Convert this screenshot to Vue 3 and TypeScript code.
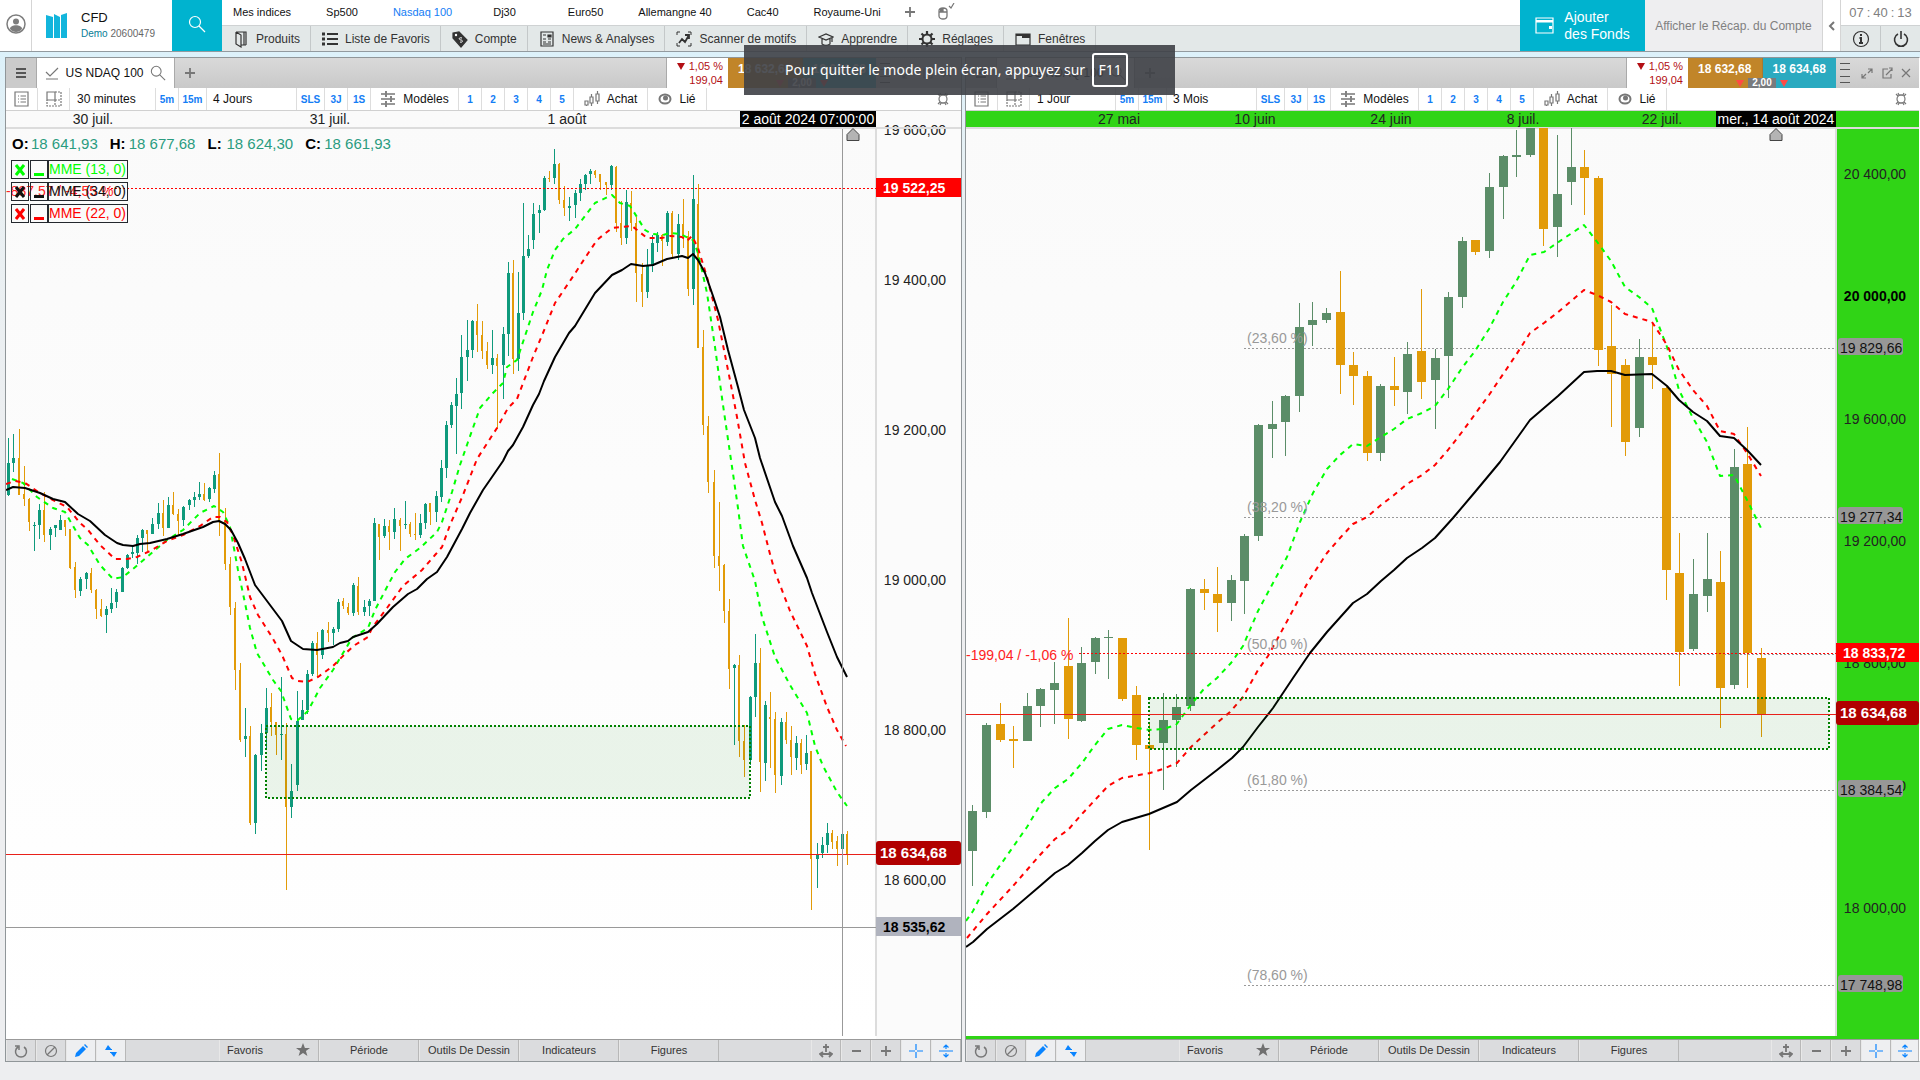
<script setup lang="ts">
type Candle = { x: number; hi: number; top: number; bot: number; lo: number; up: boolean }
type Level = { price: string; y: number; kind: string }

const icons: Record<string, string> = {
  user: '<circle cx="10" cy="10" r="9" fill="none" stroke="#7d7d7d" stroke-width="1.5"/><circle cx="10" cy="7.5" r="3" fill="#7d7d7d"/><path d="M4 15c0-5 12-5 12 0-3 4-9 4-12 0z" fill="#7d7d7d"/>',
  logo: '<path d="M0 2l7 2v21H0zM8 1l6 3v21H8zM15 2l6-2v25h-6z" fill="#12b5dc"/><path d="M7.5 2v23M14.5 1v24" stroke="#fff"/>',
  search: '<circle cx="7" cy="7" r="5.5"/><path d="M11 11l6 6"/>',
  book: '<path d="M3 2h10v13M3 2v12l5 3V5L3 2M11 2v13M8 15h5"/>',
  list: '<path d="M5 4h11M5 9h11M5 14h11" stroke-width="2"/><path d="M0 4h3M0 9h3M0 14h3" stroke-width="3"/>',
  tag: '<path d="M1 3l6-1 8 8-6 7-8-9z" fill="#333"/><circle cx="4" cy="5" r="1.2" fill="#fff" stroke="none"/><path d="M10 8c-4-1-3 2-1 2s2 3-1 2" stroke="#fff" stroke-width="1"/>',
  news: '<path d="M2 2h12v14H2z"/><path d="M4 5h3M4 9h3M4 12h3M9 9h3M9 12h3M4 14h8"/><path d="M9 5h3v2H9z" fill="#333"/>',
  scan: '<path d="M1 5V2h3M12 2h3v3M15 13v3h-3M4 16H1v-3" stroke-width="1"/><path d="M3 13l3-4 3 3 4-7M9 5h4v4" stroke-width="1.8"/>',
  learn: '<path d="M1 7l7-3 7 3-7 3zM4 9v5c3 2 5 2 8 0V9M14 8v4"/>',
  gear: '<circle cx="8" cy="9" r="4.5" stroke-width="2"/><path d="M8 1v3M8 14v3M0 9h3M13 9h3M2.5 3.5l2 2M11.5 12.5l2 2M2.5 14.5l2-2M11.5 5.5l2-2" stroke-width="2.2"/>',
  windows: '<path d="M1 4h14v11H1z"/><path d="M1 5h14M7 7h8" stroke-width="2"/>',
  wallet: '<path d="M1 2h17v15H1zM1 6h17" fill="none"/><path d="M1 5h17" stroke-width="2"/><path d="M14 10h3v3h-3z" fill="#fff" stroke="none"/>',
  info: '<circle cx="9" cy="9" r="7.5"/><path d="M7.5 8H9v5M7 13h4" stroke-width="2"/><path d="M9 4v2" stroke-width="2"/>',
  power: '<path d="M6 4a6.5 6.5 0 1 0 6 0M9 1v8" stroke-width="1.6"/>',
  mouse: '<path d="M1 8c0-4 8-4 8 0v5c0 4-8 4-8 0zM1 9h8M5 5v4" stroke-width="1.3"/><path d="M2 6h3v3H2z" fill="#777" stroke="none"/><path d="M11 3l2 2 3-5"/>',
  chart: '<path d="M1 7l4 4 8-8M1 14h12"/>',
  sheet: '<path d="M1 1h13v14H1z"/><path d="M4 5h1M4 8h1M4 11h1M6.5 5H12M6.5 8H12M6.5 11H12"/>',
  tiles: '<path d="M1 1h8v8H1z"/><path d="M9 1h6v14H1V9M9 9v6M9 9h6" stroke-dasharray="2 1"/>',
  sliders: '<path d="M1 3h4M7 3h8M1 8h9M12 8h3M1 13h4M7 13h8" stroke-width="1.5"/><path d="M6 0v6M11 5v6M6 10v6" stroke-width="1.8"/>',
  candles: '<path d="M1 10h3v4H1zM6 6h3v6H6zM12 3h3v7h-3zM7.5 3v3M7.5 12v3M13.5 0v3M13.5 10v3M2.5 14v1"/>',
  eye: '<ellipse cx="7" cy="7" rx="5.5" ry="4.5" stroke-width="2"/><circle cx="7.5" cy="6" r="2.5" fill="#777" stroke="none"/>',
  cog: '<circle cx="8" cy="8" r="4"/><path d="M3 3l2 2M13 3l-2 2M3 13l2-2M13 13l-2-2M5 2l1 2h4l1-2M5 14l1-2h4l1 2" stroke-width="1.2"/>',
  expand: '<path d="M7 2h4v4M11 2L7 6M5 11H1V7M1 11l4-4"/>',
  popout: '<path d="M7 2H2v9h8V7M5 8l6-6M8 1h3v3"/>',
  close: '<path d="M2 2l8 8M10 2l-8 8"/>',
  reload: '<path d="M4 3a5.5 5.5 0 1 0 6 0M1 2h4v4" stroke-width="1.5"/>',
  ban: '<circle cx="7" cy="7" r="5.5"/><path d="M3 11l8-8"/>',
  pencil: '<path d="M1 13l1-4 7-7 3 3-7 7zM10 1l1-1 3 3-1 1z" fill="#0a84ff" stroke="none"/>',
  swap: '<path d="M1 6l3-5 4 5zM6 8h7l-3 5z" fill="#0a84ff" stroke="none"/><path d="M2 5.5h6M6 8.5h6" stroke="#0a84ff"/>',
  star: '<path d="M7 0l1.9 4.9H14L9.9 8l1.5 5L7 10l-4.4 3 1.5-5L0 4.9h5.1z" fill="#707070" stroke="none"/>',
  fit: '<path d="M7 0v8M4 3h6M1 10h12M4 8l-3 2 3 3M10 8l3 2-3 3" stroke-width="1.8"/>',
  minus: '<path d="M3 7h9" stroke-width="2"/>',
  plus: '<path d="M2 7h10M7 2v10" stroke-width="1.8"/>',
  cross: '<path d="M7 0v6M7 8v6M0 7h6M8 7h6" stroke="#0a84ff"/>',
  updown: '<path d="M0 7h14M7 1v4M7 9v4M4.5 3.5L7 1l2.5 2.5M4.5 10.5L7 13l2.5-2.5" stroke="#0a84ff"/>',
}

const indices = ['Mes indices', 'Sp500', 'Nasdaq 100', 'Dj30', 'Euro50', 'Allemangne 40', 'Cac40', 'Royaume-Uni']
const menu = [
  ['book', 'Produits'], ['list', 'Liste de Favoris'], ['tag', 'Compte'], ['news', 'News & Analyses'],
  ['scan', 'Scanner de motifs'], ['learn', 'Apprendre'], ['gear', 'Réglages'], ['windows', 'Fenêtres'],
]

// Each candle is "x high bodyTop bodyBottom low direction".
const parse = (s: string): Candle[] =>
  s.trim().split(/\s*,\s*/).map((c) => {
    const [x, hi, top, bot, lo, d] = c.split(' ')
    return { x: +x, hi: +hi, top: +top, bot: +bot, lo: +lo, up: d === 'u' }
  })

const halfHour = parse(`8 438 463 495 496 u,13 434 458 463 472 u,19 429 458 495 495 d,24 466 494 499 506 d,29 498 499 522 531 d,34 522 525 526 551 u,39 504 510 525 539 u,44 492 510 535 542 d,50 527 529 535 550 u,55 525 525 528 537 u,60 515 520 530 530 u,65 520 520 527 536 d,70 529 529 568 569 d,75 562 567 590 598 d,80 577 579 591 596 u,86 572 573 579 589 u,91 568 573 590 593 d,96 589 590 609 619 d,101 599 609 616 617 d,106 606 609 615 633 u,111 588 603 609 613 u,116 589 592 602 608 u,122 567 568 592 592 u,127 554 555 568 569 u,132 546 552 554 558 u,137 535 538 553 564 u,142 529 530 538 552 u,147 530 530 534 551 d,152 518 524 534 534 u,158 503 513 524 529 u,163 500 513 528 536 d,168 497 505 528 528 u,173 492 505 514 515 d,178 509 514 521 535 d,183 506 507 520 526 u,189 499 500 505 510 u,194 492 497 500 507 u,199 482 494 497 500 u,204 483 494 500 501 d,209 487 488 499 502 u,214 471 475 489 493 u,219 453 474 521 536 d,225 508 521 564 570 d,230 557 564 607 615 d,235 602 608 670 690 d,240 663 670 740 742 d,245 708 736 739 757 u,250 726 736 823 825 d,255 754 755 823 834 u,261 724 733 755 771 u,266 688 708 733 750 u,271 693 707 722 736 d,276 722 722 735 755 d,281 677 734 735 760 u,286 723 734 807 890 d,291 764 791 807 818 u,297 691 721 785 791 u,302 700 710 720 720 u,307 670 674 710 714 u,312 641 643 674 676 u,317 632 643 655 677 d,322 629 630 655 659 u,328 622 630 633 642 d,333 627 629 633 645 u,338 599 602 629 632 u,343 598 601 606 609 d,348 603 607 613 615 d,353 583 585 613 616 u,358 577 586 612 615 d,364 600 607 612 616 u,369 599 601 606 616 u,374 518 523 601 601 u,379 524 524 537 560 d,384 519 526 536 538 u,389 520 526 532 550 d,394 508 519 532 539 u,400 518 520 526 551 d,405 501 524 525 529 u,410 522 524 534 537 d,415 513 534 535 540 d,420 514 523 535 538 u,425 503 504 523 529 u,430 503 503 512 525 d,436 491 496 512 522 u,441 460 468 497 502 u,446 421 425 468 478 u,451 402 405 425 428 u,456 378 394 406 454 u,461 335 357 393 409 u,467 320 350 357 381 u,472 320 321 350 358 u,477 304 321 335 352 d,482 321 335 351 359 d,487 342 351 365 369 d,492 330 358 365 374 u,497 354 358 366 429 d,503 327 334 365 399 u,508 262 273 334 356 u,513 260 273 359 374 d,518 272 313 359 371 u,523 203 256 313 320 u,528 235 249 256 258 u,533 203 214 240 249 u,539 205 210 213 233 u,544 176 178 210 211 u,549 171 178 179 182 d,554 149 164 178 184 u,559 163 164 200 204 d,564 186 200 208 216 d,569 197 206 208 221 u,575 190 193 205 218 u,580 179 184 193 201 u,585 174 175 184 190 u,590 169 171 174 184 u,595 170 171 175 178 d,600 174 174 182 190 d,606 182 182 185 195 d,611 165 166 185 190 u,616 166 167 223 232 d,621 201 223 238 245 d,626 190 202 238 244 u,631 191 203 223 231 d,636 217 223 273 302 d,642 263 274 292 307 d,647 249 266 292 298 u,652 235 243 266 272 u,657 232 235 243 252 u,662 234 235 241 266 d,667 211 213 242 246 u,672 211 213 254 258 d,678 214 224 254 260 u,683 199 224 236 248 d,688 231 236 289 296 d,693 175 199 289 305 u,698 184 204 348 348 d,703 330 347 425 435 d,708 416 426 482 493 d,714 470 482 556 568 d,719 502 556 566 591 d,724 564 565 611 623 d,729 599 611 669 689 d,734 664 665 668 745 u,739 655 665 741 757 d,744 725 741 760 777 d,750 696 697 760 765 u,755 634 663 697 717 u,760 648 663 762 792 d,765 701 705 763 781 u,770 692 717 719 768 d,775 712 719 775 793 d,781 718 722 776 785 u,786 712 722 740 744 d,791 726 740 757 775 d,796 736 743 758 770 u,801 739 743 765 774 d,806 735 753 764 770 u,811 751 751 859 910 d,817 843 854 859 888 u,822 837 845 853 858 u,827 823 833 845 853 u,832 830 833 842 849 d,837 836 841 849 866 d,842 834 834 849 849 u,847 831 834 855 865 d`)

const daily = parse(`972 805 811 851 886 u,986 723 725 812 818 u,1000 703 724 740 742 d,1013 726 739 741 768 d,1027 693 706 741 741 u,1040 688 689 706 727 u,1054 662 683 690 724 u,1068 618 666 719 739 d,1081 647 663 721 722 u,1095 637 638 662 674 u,1108 630 637 638 679 u,1122 638 638 699 701 d,1136 686 695 745 760 d,1149 724 745 749 850 d,1163 693 720 743 790 u,1176 694 707 720 767 u,1190 588 589 706 711 u,1204 579 589 593 610 d,1217 567 594 603 632 d,1231 575 580 603 621 u,1244 534 536 581 614 u,1258 424 425 536 541 u,1272 401 424 429 458 u,1285 395 396 422 456 u,1299 303 327 396 412 u,1312 302 320 325 346 u,1326 308 313 320 323 u,1340 271 312 365 394 d,1353 352 365 376 405 d,1367 371 376 453 461 d,1380 384 386 453 461 u,1394 357 386 390 406 d,1407 342 354 392 414 u,1421 289 351 382 399 d,1435 349 358 380 429 u,1448 292 297 356 398 u,1462 237 241 297 308 u,1475 240 240 252 255 d,1489 173 187 251 258 u,1503 155 156 187 219 u,1516 130 155 157 177 u,1530 128 128 155 157 u,1543 128 128 229 246 d,1557 135 194 227 257 u,1571 128 167 182 205 u,1584 150 167 178 215 d,1598 176 178 350 366 d,1611 305 346 374 427 d,1625 359 365 442 456 d,1639 339 357 428 437 u,1652 324 357 365 389 d,1666 387 388 570 600 d,1679 533 573 652 686 d,1693 559 594 649 651 u,1707 533 579 596 612 u,1720 551 582 688 728 d,1734 449 467 685 689 u,1747 427 464 653 688 d,1761 648 658 714 737 d`)

const charts = [
  {
    id: 'left', viewBox: '6 111 955 928', x0: 6, x1: 961, axis: 876, width: 3, green: false,
    period: '30 minutes', range: '4 Jours', upColor: '#0f9a7c', candles: halfHour,
    slow: '6,490 13,487 25,488 40,493 53,499 65,502 78,514 90,521 105,535 117,543 123,545 133,546 140,544 150,543 167,539 183,534 203,527 213,522 219,521 225,524 231,530 238,543 245,559 255,585 267,601 282,621 291,641 303,649 317,650 333,647 340,643 348,641 353,637 368,632 377,624 393,607 408,594 417,589 427,579 437,572 447,557 462,529 470,513 483,490 492,477 503,461 508,451 513,445 523,427 533,405 539,394 544,381 555,357 569,333 575,326 595,293 612,275 622,270 631,264 643,266 653,265 667,259 682,256 688,258 693,254 698,260 705,273 713,296 720,317 728,350 738,387 744,410 755,438 760,458 775,502 782,516 793,546 807,578 812,593 827,632 837,657 847,677',
    mid: '6,484 15,481 25,483 40,493 53,500 67,507 80,523 88,530 100,545 115,559 127,559 137,557 150,551 167,541 183,535 200,526 213,517 220,517 227,522 233,535 242,563 250,597 258,615 272,637 282,655 292,678 298,681 307,682 318,677 333,666 347,652 355,645 368,637 372,628 387,608 403,586 422,570 435,555 442,547 450,525 463,495 477,459 497,428 508,408 517,399 533,357 543,333 555,303 570,281 587,255 597,240 612,228 632,226 647,238 662,238 670,236 682,237 687,241 692,236 698,248 707,277 718,320 730,380 737,417 745,463 755,500 762,523 770,554 775,572 790,611 807,646 815,674 827,707 837,730 846,746',
    fast: '12,479 23,483 37,497 53,508 65,512 80,538 88,545 100,565 113,579 123,577 133,569 147,557 167,540 183,530 200,513 214,506 223,512 230,527 238,570 245,603 250,628 257,653 273,680 281,691 291,719 298,720 308,711 320,688 333,670 352,638 368,628 375,610 387,587 395,572 405,559 420,548 437,532 442,522 452,492 460,465 468,442 480,408 493,393 503,383 507,367 517,360 533,312 542,290 547,270 555,250 563,239 575,229 595,203 612,195 620,203 630,206 637,217 645,230 652,234 663,235 670,233 680,234 693,240 698,253 707,293 715,347 723,405 730,453 738,508 743,546 755,581 762,617 775,657 790,685 807,713 815,746 823,766 837,792 847,806',
    zone: { x: 266, y: 726, w: 484, h: 72 },
    dates: [{ x: 93, t: '30 juil.' }, { x: 330, t: '31 juil.' }, { x: 567, t: '1 août' }],
    stamp: { x: 740, w: 136, t: '2 août 2024 07:00:00' }, marker: 853,
    close: { y: 188, from: 107, t: '-887,57 / -4,55 %', tx: 6, ty: 196 }, last: 854, fibs: [] as { y: number; t: string }[],
    ticks: [{ y: 130, t: '19 600,00' }, { y: 280, t: '19 400,00' }, { y: 430, t: '19 200,00' }, { y: 580, t: '19 000,00' }, { y: 730, t: '18 800,00' }, { y: 880, t: '18 600,00' }],
    levels: [{ price: '19 522,25', y: 188, kind: 'close' }, { price: '18 634,68', y: 853, kind: 'last' }, { price: '18 535,62', y: 927, kind: 'cursor' }] as Level[],
  },
  {
    id: 'right', viewBox: '966 111 953 928', x0: 966, x1: 1919, axis: 1836, width: 9, green: true,
    period: '1 Jour', range: '3 Mois', upColor: '#5b8d68', candles: daily,
    slow: '966,947 973,942 987,929 1013,909 1040,886 1055,873 1068,865 1082,853 1095,841 1108,830 1122,822 1149,814 1177,802 1191,790 1217,770 1232,758 1243,747 1258,727 1273,708 1293,678 1310,653 1327,632 1353,603 1367,594 1381,581 1394,570 1407,558 1422,548 1435,538 1453,518 1475,492 1500,462 1530,420 1558,396 1584,372 1597,371 1611,371 1625,375 1652,374 1667,386 1679,400 1693,412 1707,421 1720,436 1734,438 1747,450 1761,465',
    mid: '967,938 987,914 1013,886 1040,855 1055,839 1068,830 1082,814 1108,786 1122,778 1150,773 1163,769 1177,763 1191,747 1217,723 1230,712 1243,697 1258,670 1268,656 1285,625 1308,582 1327,553 1340,538 1353,524 1367,517 1381,505 1394,495 1407,484 1422,475 1435,465 1448,450 1462,432 1489,395 1516,355 1530,333 1544,323 1557,313 1570,302 1584,290 1597,295 1611,302 1625,314 1652,322 1667,345 1679,370 1693,390 1707,406 1720,431 1734,434 1747,453 1761,476',
    fast: '966,921 973,911 987,884 1013,847 1027,827 1042,802 1055,788 1068,779 1082,763 1095,745 1108,729 1122,725 1137,728 1149,730 1163,729 1176,725 1190,706 1203,690 1217,678 1231,663 1243,646 1258,611 1273,583 1287,557 1300,522 1313,493 1327,469 1340,455 1353,444 1367,446 1381,437 1394,429 1407,419 1422,413 1435,406 1448,389 1462,368 1475,351 1489,329 1503,302 1516,282 1530,255 1544,252 1557,243 1584,225 1598,243 1611,261 1625,287 1639,297 1652,308 1667,347 1679,390 1693,418 1707,442 1720,476 1734,475 1747,500 1761,528',
    zone: { x: 1149, y: 698, w: 680, h: 51 },
    dates: [{ x: 1119, t: '27 mai' }, { x: 1255, t: '10 juin' }, { x: 1391, t: '24 juin' }, { x: 1523, t: '8 juil.' }, { x: 1662, t: '22 juil.' }],
    stamp: { x: 1716, w: 120, t: 'mer., 14 août 2024' }, marker: 1776,
    close: { y: 653, from: 1079, t: '-199,04 / -1,06 %', tx: 966, ty: 660 }, last: 714,
    fibs: [{ y: 348, t: '(23,60 %)' }, { y: 517, t: '(38,20 %)' }, { y: 654, t: '(50,00 %)' }, { y: 790, t: '(61,80 %)' }, { y: 985, t: '(78,60 %)' }],
    ticks: [{ y: 174, t: '20 400,00' }, { y: 296, t: '20 000,00' }, { y: 419, t: '19 600,00' }, { y: 541, t: '19 200,00' }, { y: 663, t: '18 800,00' }, { y: 786, t: '18 400,00' }, { y: 908, t: '18 000,00' }],
    levels: [
      { price: '19 829,66', y: 348, kind: 'fib' }, { price: '19 277,34', y: 517, kind: 'fib' }, { price: '18 384,54', y: 790, kind: 'fib' },
      { price: '17 748,98', y: 985, kind: 'fib' }, { price: '18 833,72', y: 653, kind: 'close' }, { price: '18 634,68', y: 713, kind: 'last' },
    ] as Level[],
  },
]

const ohlc = [['O:', '18 641,93'], ['H:', '18 677,68'], ['L:', '18 624,30'], ['C:', '18 661,93']]
const averages = [['MME (13, 0)', 'lime'], ['MME (34, 0)', 'black'], ['MME (22, 0)', 'red']]
</script>

<template>
  <div class="app">
    <header class="top">
      <button class="user" aria-label="Profil"><svg width="20" height="20" viewBox="0 0 20 20" v-html="icons.user" /></button>
      <div class="brand">
        <svg width="21" height="25" viewBox="0 0 21 25" v-html="icons.logo" />
        <div class="account"><span class="cfd">CFD</span><span class="demo"><b>Demo</b> 20600479</span></div>
      </div>
      <button class="find" aria-label="Rechercher"><svg class="ic" width="18" height="18" viewBox="0 0 18 18" v-html="icons.search" /></button>
      <div class="navs">
        <nav class="indices">
          <a v-for="n in indices" :key="n" href="#" :class="{ on: n === 'Nasdaq 100', wide: n === 'Dj30' }">{{ n }}</a>
          <button aria-label="Ajouter"><svg class="ic" width="14" height="14" viewBox="0 0 14 14" v-html="icons.plus" /></button>
          <button aria-label="Souris"><svg class="ic" width="17" height="18" viewBox="0 0 17 18" v-html="icons.mouse" /></button>
        </nav>
        <nav class="menu">
          <button v-for="m in menu" :key="m[0]"><svg class="ic dark" width="16" height="18" viewBox="0 0 16 18" v-html="icons[m[0]]" />{{ m[1] }}</button>
        </nav>
      </div>
      <button class="funds"><svg class="ic" width="20" height="19" viewBox="0 0 20 19" v-html="icons.wallet" /><span>Ajouter<br>des Fonds</span></button>
      <button class="recap">Afficher le Récap. du Compte</button>
      <button class="fold" aria-label="Replier"><svg class="ic" width="8" height="10" viewBox="0 0 8 10"><path d="M6 1L2 5l4 4" stroke-width="2" /></svg></button>
      <div class="status">
        <div class="clock"><span>07</span><span>:</span><span>40</span><span>:</span><span>13</span></div>
        <div class="sys">
          <button aria-label="Informations"><svg class="ic dark" width="18" height="18" viewBox="0 0 18 18" v-html="icons.info" /></button>
          <button aria-label="Déconnexion"><svg class="ic dark" width="18" height="18" viewBox="0 0 18 18" v-html="icons.power" /></button>
        </div>
      </div>
    </header>

    <main class="desk">
      <section v-for="c in charts" :key="c.id" class="panel" :class="c.id">
        <div class="tabs">
          <button class="burger" aria-label="Menu"><i /><i /><i /></button>
          <button class="tab"><svg class="ic" width="14" height="16" viewBox="0 0 14 16" v-html="icons.chart" />US NDAQ 100<svg class="ic" width="16" height="18" viewBox="0 0 18 18" v-html="icons.search" /></button>
          <button class="new" aria-label="Nouvel onglet"><svg class="ic" width="14" height="14" viewBox="0 0 14 14" v-html="icons.plus" /></button>
          <div class="change"><span><i class="down" />1,05 %</span><span>199,04</span></div>
          <div class="quotes">
            <button class="sell">18 632,68</button><button class="buy">18 634,68</button>
            <div class="spread"><i class="down" /><span>2,00</span><i class="down" /></div>
          </div>
          <div class="depth"><i /><i /><i /><i /></div>
          <div class="win">
            <button aria-label="Agrandir"><svg class="ic" width="12" height="12" viewBox="0 0 12 12" v-html="icons.expand" /></button>
            <button aria-label="Détacher"><svg class="ic" width="12" height="12" viewBox="0 0 12 12" v-html="icons.popout" /></button>
            <button aria-label="Fermer"><svg class="ic" width="12" height="12" viewBox="0 0 12 12" v-html="icons.close" /></button>
          </div>
        </div>

        <div class="tools">
          <button class="w32" aria-label="Liste"><svg class="ic" width="15" height="16" viewBox="0 0 15 16" v-html="icons.sheet" /></button>
          <button class="w32" aria-label="Disposition"><svg class="ic" width="16" height="16" viewBox="0 0 16 16" v-html="icons.tiles" /></button>
          <button class="period">{{ c.period }}</button>
          <button class="q">5m</button><button class="q w28">15m</button>
          <button class="range">{{ c.range }}</button>
          <button class="q w28">SLS</button><button class="q">3J</button><button class="q">1S</button>
          <button class="models"><svg class="ic" width="16" height="16" viewBox="0 0 16 16" v-html="icons.sliders" />Modèles</button>
          <button v-for="n in 5" :key="n" class="q">{{ n }}</button>
          <button class="order"><svg class="ic" width="16" height="16" viewBox="0 0 16 16" v-html="icons.candles" />Achat</button>
          <button class="link"><svg class="ic" width="14" height="14" viewBox="0 0 14 14" v-html="icons.eye" />Lié</button>
          <button class="setup" aria-label="Options"><svg class="ic" width="16" height="16" viewBox="0 0 16 16" v-html="icons.cog" /></button>
        </div>

        <div class="plot">
          <svg class="graph" :viewBox="c.viewBox">
            <defs>
              <linearGradient :id="'bg-' + c.id" x1="0" y1="0" x2="0" y2="1"><stop offset="0" stop-color="#fafafa" /><stop offset="1" stop-color="#fff" /></linearGradient>
              <clipPath :id="'clip-' + c.id"><rect :x="c.x0" y="128" :width="c.axis - c.x0" height="911" /></clipPath>
            </defs>
            <rect :x="c.x0" y="111" :width="c.x1 - c.x0" height="928" :fill="`url(#bg-${c.id})`" />
            <rect v-if="!c.green" :x="c.axis" y="129" :width="c.x1 - c.axis" height="910" fill="#fbfbfb" />
            <template v-if="c.green">
              <rect :x="c.x0" y="111" :width="c.x1 - c.x0" height="16" fill="#30d416" />
              <rect :x="c.axis + 1" y="129" :width="c.x1 - c.axis - 1" height="910" fill="#30d416" />
              <rect :x="c.x0" y="1036" :width="c.x1 - c.x0" height="3" fill="#30d416" />
            </template>
            <g class="axis-text" text-anchor="middle">
              <text v-for="d in c.dates" :key="d.t" :x="d.x" y="124">{{ d.t }}</text>
              <text v-for="t in c.ticks" :key="t.t" :x="c.axis + 39" :y="t.y + 5" :class="{ strong: t.t === '20 000,00' }">{{ t.t }}</text>
            </g>
            <path :d="`M${c.x0} 128H${c.x1}M${c.axis} 129V1036`" stroke="#dcdcdc" stroke-width="2" />
            <rect :x="c.stamp.x" y="111" :width="c.stamp.w" height="16" fill="#000" />
            <text :x="c.stamp.x + c.stamp.w / 2" y="124" text-anchor="middle" class="axis-text white">{{ c.stamp.t }}</text>

            <line v-for="f in c.fibs" :key="f.t" x1="1244" x2="1835" :y1="f.y + 0.5" :y2="f.y + 0.5" stroke="#999" stroke-dasharray="2 2" />
            <g :clip-path="`url(#clip-${c.id})`">
              <g shape-rendering="crispEdges">
                <g v-for="k in c.candles" :key="k.x" :fill="k.up ? c.upColor : '#e29b08'">
                  <rect :x="k.x" :y="k.hi" width="1" :height="k.lo - k.hi" />
                  <rect :x="k.x - (c.width - 1) / 2" :y="k.top" :width="c.width === 3 && !k.up ? 2 : c.width" :height="Math.max(1, k.bot - k.top)" />
                </g>
              </g>
              <polyline :points="c.fast" class="ma" stroke="#0f0" stroke-dasharray="5 5" />
              <polyline :points="c.mid" class="ma" stroke="#f00" stroke-dasharray="5 5" />
              <polyline :points="c.slow" class="ma" stroke="#000" />
            </g>
            <text v-for="f in c.fibs" :key="f.y" x="1247" :y="f.y - 5" class="axis-text fib">{{ f.t }}</text>
            <rect :x="c.zone.x" :y="c.zone.y" :width="c.zone.w" :height="c.zone.h" fill="#008000" fill-opacity="0.08" stroke="#008000" stroke-width="2" stroke-dasharray="2 2" />
            <line :x1="c.close.from" :x2="c.axis" :y1="c.close.y + 0.5" :y2="c.close.y + 0.5" stroke="#f00" stroke-dasharray="2 2" />
            <line :x1="c.x0" :x2="c.axis" :y1="c.last + 0.5" :y2="c.last + 0.5" stroke="#e8201a" />
            <text :x="c.close.tx" :y="c.close.ty" class="axis-text diff">{{ c.close.t }}</text>
            <path v-if="!c.green" d="M6 927.5H876M842.5 129V1036" stroke="#999" />
            <path :d="`M${c.marker - 6} 140.5v-6l6-6l6 6v6z`" fill="#b4b4b4" stroke="#444" />

            <g v-for="l in c.levels" :key="l.price" :class="['level', l.kind]">
              <rect v-if="l.kind === 'fib'" :x="c.axis + 2" :y="l.y - 10" width="65" height="17" rx="3" />
              <rect v-else-if="l.kind === 'last'" :x="c.axis" :y="l.y - 12" :width="c.x1 - c.axis" height="24" rx="3" />
              <rect v-else :x="c.axis" :y="l.y - 10" :width="c.x1 - c.axis" height="19" />
              <text :x="c.axis + (l.kind === 'close' || l.kind === 'cursor' ? 7 : 4)" :y="l.y + 5">{{ l.price }}</text>
            </g>
          </svg>

          <div v-if="!c.green" class="overlay">
            <div class="ohlc"><span v-for="o in ohlc" :key="o[0]"><b>{{ o[0] }}</b>{{ o[1] }}</span></div>
            <div v-for="a in averages" :key="a[0]" class="avg" :class="a[1]">
              <button aria-label="Supprimer"><svg width="10" height="12" viewBox="0 0 10 12"><path d="M1 1l8 10M9 1L1 11" stroke="currentColor" stroke-width="3" /></svg></button>
              <button aria-label="Réduire"><i /></button>
              <span>{{ a[0] }}</span>
            </div>
          </div>
        </div>

        <footer class="dock">
          <button class="sq" aria-label="Actualiser"><svg class="ic" width="14" height="14" viewBox="0 0 14 14" v-html="icons.reload" /></button>
          <button class="sq" aria-label="Effacer"><svg class="ic" width="14" height="14" viewBox="0 0 14 14" v-html="icons.ban" /></button>
          <button class="sq lit" aria-label="Dessiner"><svg class="ic" width="14" height="14" viewBox="0 0 14 14" v-html="icons.pencil" /></button>
          <button class="sq lit" aria-label="Échelle"><svg class="ic" width="14" height="14" viewBox="0 0 14 14" v-html="icons.swap" /></button>
          <div class="gap" />
          <button class="cell fav">Favoris<svg class="ic" width="14" height="14" viewBox="0 0 14 14" v-html="icons.star" /></button>
          <button class="cell">Période</button><button class="cell">Outils De Dessin</button>
          <button class="cell">Indicateurs</button><button class="cell">Figures</button>
          <div class="gap" />
          <button class="sq" aria-label="Ajuster"><svg class="ic" width="14" height="14" viewBox="0 0 14 14" v-html="icons.fit" /></button>
          <button class="sq" aria-label="Zoom arrière"><svg class="ic" width="14" height="14" viewBox="0 0 14 14" v-html="icons.minus" /></button>
          <button class="sq" aria-label="Zoom avant"><svg class="ic" width="14" height="14" viewBox="0 0 14 14" v-html="icons.plus" /></button>
          <button class="sq lit" aria-label="Curseur"><svg class="ic" width="14" height="14" viewBox="0 0 14 14" v-html="icons.cross" /></button>
          <button class="sq lit" aria-label="Centrer"><svg class="ic" width="14" height="14" viewBox="0 0 14 14" v-html="icons.updown" /></button>
        </footer>
      </section>
    </main>

    <div class="toast" role="status">Pour quitter le mode plein écran, appuyez sur <kbd>F11</kbd></div>
  </div>
</template>

<style>
body { margin: 0; background: #edeef0; }
</style>

<style scoped>
.app { position: relative; min-height: 100vh; font: 12px/16px "Liberation Sans", Arial, sans-serif; color: #111; background: linear-gradient(#dcf1fa 50px, #e9f0f3 180px, #edeef0 500px); overflow: hidden; }
* { box-sizing: border-box; }
button { font: inherit; color: inherit; border: 0; padding: 0; margin: 0; background: none; display: flex; align-items: center; justify-content: center; white-space: nowrap; }
a { color: inherit; text-decoration: none; }
svg { display: block; flex: none; }
.ic { fill: none; stroke: #777; stroke-width: 1.2; }
.ic.dark { stroke: #333; }

.top { display: flex; height: 52px; background: #fff; border-bottom: 1px solid #929a9f; }
.user { width: 32px; border-right: 1px solid #d5d5d5; padding-bottom: 3px; }
.brand { width: 140px; display: flex; align-items: center; gap: 14px; padding-left: 14px; }
.account { display: flex; flex-direction: column; line-height: 16px; }
.cfd { font-size: 13px; }
.demo { font-size: 10px; color: #666; }
.demo b { font-weight: 400; color: #087d96; }
.find { width: 50px; background: #00b3cf; padding-bottom: 4px; }
.find .ic { stroke: #fff; }
.navs { flex: 1; min-width: 0; display: flex; flex-direction: column; }
.indices { height: 25px; display: flex; align-items: center; gap: 35px; padding: 0 0 2px 11px; font-size: 11px; white-space: nowrap; }
.indices .on { color: #147df5; }
.indices .wide { margin: 0 17px 0 6px; }
.indices button { margin-left: -14px; width: 16px; }
.menu { flex: 1; display: flex; background: #e3e8e8; border-top: 1px solid #cfd2d3; color: #333; }
.menu button { gap: 7px; padding: 0 10px 0 11px; border-right: 1px solid #c4c8c9; }
.funds { width: 125px; background: #00b3cf; color: #fff; gap: 9px; font-size: 14px; line-height: 17px; text-align: left; }
.funds .ic { stroke: #fff; }
.recap { width: 177px; background: #eeeef0; color: #808080; }
.fold { width: 19px; border: solid #d5d5d5; border-width: 0 1px; }
.status { width: 79px; display: flex; flex-direction: column; }
.clock { height: 25px; display: flex; align-items: center; justify-content: center; gap: 3px; font-size: 13px; color: #808080; }
.sys { flex: 1; display: flex; background: #e3e8e8; border-top: 1px solid #cfd2d3; }
.sys button { flex: 1; }
.sys button + button { border-left: 1px solid #c4c8c9; }

.desk { display: grid; grid-template-columns: 957fr 955fr; gap: 3px; padding: 5px 0 18px 5px; }
.panel { min-width: 0; border: 1px solid #909699; background: #fff; }
.panel.right { border-right-color: #fff; }
.tabs { display: flex; height: 30px; background: linear-gradient(#d9d9d9, #c9c9c9); }
.burger { width: 31px; flex-direction: column; gap: 2px; background: #cbcbcb; border-right: 1px solid #aaa; }
.burger i { width: 10px; height: 2px; background: #555; }
.tab { width: 138px; background: #fff; gap: 6px; border-right: 1px solid #aaa; }
.new { width: 30px; }
.change { margin-left: auto; width: 62px; background: #fff; border-left: 1px solid #aaa; padding: 1px 5px 0 0; text-align: right; font-size: 11px; line-height: 14px; color: #b30f14; display: flex; flex-direction: column; }
.down { display: inline-block; border: 4px solid transparent; border-top: 7px solid currentColor; border-bottom: 0; margin-right: 4px; }
.quotes { position: relative; display: flex; width: 148px; color: #fff; font-weight: 700; }
.quotes button { flex: 1; padding-bottom: 9px; }
.sell { background: #c18529; border-right: 1px solid #a87830; }
.buy { background: #2aaac0; }
.spread { position: absolute; left: 0; right: 0; bottom: 0; height: 10px; display: flex; justify-content: center; align-items: center; gap: 4px; color: #ff4a45; font-size: 10px; line-height: 10px; }
.spread span { color: #fff; background: #787b7e; padding: 0 4px; }
.spread .down { margin: 0; }
.depth { width: 14px; display: flex; flex-direction: column; justify-content: space-evenly; padding-left: 4px; }
.depth i { height: 1px; background: #555; }
.win { width: 71px; display: flex; justify-content: space-evenly; padding-left: 4px; }
.right .win { width: 69px; }
.tools { display: flex; height: 23px; background: #fff; border-bottom: 1px solid #d0d0d0; white-space: nowrap; overflow: hidden; }
.tools button { border-right: 1px solid #ddd; flex: none; }
.tools .q { width: 23px; color: #147df5; font-weight: 700; font-size: 10px; padding-top: 2px; }
.tools .w28 { width: 28px; }
.w32 { width: 32px; }
.period { width: 86px; padding-left: 7px; justify-content: flex-start; }
.range { width: 90px; padding-left: 6px; justify-content: flex-start; }
.models { width: 88px; gap: 7px; }
.order { width: 74px; gap: 7px; }
.link { width: 59px; gap: 7px; }
.tools .setup { margin-left: auto; border: 0; width: 36px; }
.plot { position: relative; }
.graph { width: 100%; height: auto; font-family: "Liberation Sans", Arial, sans-serif; }
.axis-text { font-size: 14px; fill: #222; }
.strong { font-weight: 700; fill: #000; }
.white { fill: #fff; }
.fib.axis-text { fill: #999; }
.diff.axis-text { fill: #f22; }
.ma { fill: none; stroke-width: 2; stroke-linejoin: round; }
.level text { font-size: 14px; font-weight: 700; fill: #fff; }
.level.fib rect { fill: #979797; }
.level.fib text { font-weight: 400; fill: #111; }
.level.close rect { fill: #f00; }
.level.last rect { fill: #b10000; }
.level.last text { font-size: 15px; }
.level.cursor rect { fill: #b0b3be; }
.level.cursor text { fill: #000; }
.overlay { position: absolute; left: 5px; top: 23px; display: flex; flex-direction: column; gap: 3px; }
.ohlc { display: flex; gap: 12px; font-size: 15px; line-height: 20px; margin: 0 0 3px 1px; color: #2a9c80; }
.ohlc b { display: inline-block; min-width: 19px; color: #000; }
.avg { display: flex; gap: 1px; height: 19px; font-size: 14px; line-height: 17px; }
.avg button, .avg span { border: 1px solid #24282e; }
.avg button { width: 18px; }
.avg button i { width: 10px; height: 3px; background: currentColor; align-self: flex-end; margin-bottom: 2px; }
.avg span { width: 80px; margin-left: -1px; white-space: nowrap; }
.avg.lime { color: #0f0; }
.avg.black { color: #111; }
.avg.red { color: #f00; }
.dock { display: flex; height: 22px; border-top: 1px solid #9a9a9a; background: #dbdcde; font-size: 11px; color: #333; }
.sq { width: 30px; border-right: 1px solid #b8b8b8; border-left: 1px solid #e8e8e8; }
.right .sq:last-child { width: 28px; }
.lit { background: #eeeff1; }
.cell { width: 100px; border-right: 1px solid #b8b8b8; border-left: 1px solid #e8e8e8; padding-bottom: 2px; }
.fav { justify-content: space-between; padding: 0 8px 2px 7px; }
.gap { flex: 0 1 93px; }
.gap:last-of-type { flex: 1; }
.toast { position: absolute; left: 50%; top: 45px; width: 431px; height: 50px; margin-left: -216px; background: rgba(62, 64, 70, .9); color: #fff; display: flex; align-items: center; justify-content: center; gap: 7px; padding-right: 6px; font: 14px/20px "Noto Sans", "Open Sans", sans-serif; white-space: nowrap; }
.toast kbd { font: inherit; width: 36px; height: 34px; line-height: 30px; text-align: center; border: 2px solid #fff; border-radius: 3px; }
</style>
